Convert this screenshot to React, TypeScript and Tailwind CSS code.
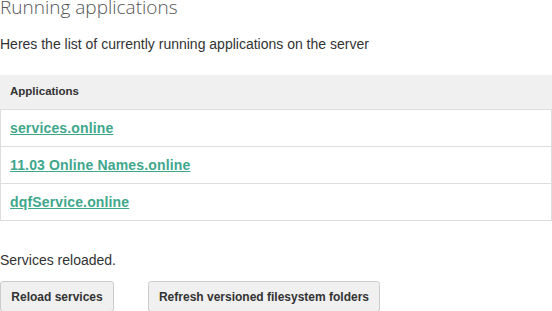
export default function App() {
  const apps = ["services.online", "11.03 Online Names.online", "dqfService.online"];
  return (
    <div className="w-[552px] h-[311px] overflow-hidden bg-white text-[#333]" style={{ fontFamily: '"Liberation Sans", Arial, sans-serif' }}>
      <h1 className="h-[14px] text-[19px] font-light leading-[14px] text-[#555]" style={{ fontFamily: '"Open Sans", sans-serif' }}>
        Running applications
      </h1>
      <p className="mt-[20px] h-[20px] text-[14px] leading-[20px]">Heres the list of currently running applications on the server</p>
      <div className="mt-[21px] w-[552px]">
        <div className="flex h-[35px] items-center border-b border-[#ddd] bg-[#f0f0f0] px-[10px] text-[11.5px] font-bold">
          Applications
        </div>
        {apps.map((a) => (
          <div key={a} className="flex h-[37px] items-center border-x border-b border-[#ddd] px-[9px]">
            <a href="#" className="text-[14px] font-bold tracking-[0.15px] text-[#3ea78c] underline">
              {a}
            </a>
          </div>
        ))}
      </div>
      <p className="mt-[29px] h-[20px] text-[14px] leading-[20px]">Services reloaded.</p>
      <div className="mt-[11px] flex gap-[34px]">
        <button className="h-[31px] w-[114px] rounded-[3px] border border-[#ccc] bg-[#f0f0f0] text-[12px] font-bold text-[#333]">
          Reload services
        </button>
        <button className="h-[31px] w-[232px] rounded-[3px] border border-[#ccc] bg-[#f0f0f0] text-[12px] font-bold text-[#333]">
          Refresh versioned filesystem folders
        </button>
      </div>
    </div>
  );
}
